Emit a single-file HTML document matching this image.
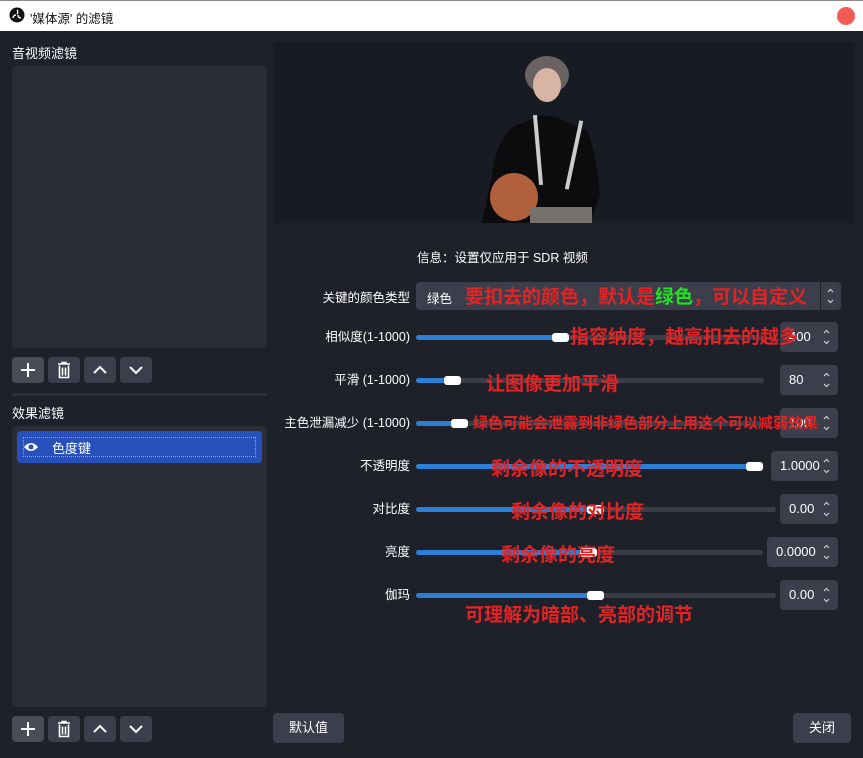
<!DOCTYPE html><html><head><meta charset="utf-8"><style>
*{margin:0;padding:0;box-sizing:border-box}
body{width:863px;height:758px;background:#1f212a;font-family:"Liberation Sans","Noto Sans CJK SC",sans-serif;color:#fff;position:relative;overflow:hidden;font-size:13px}
.a{position:absolute}
.panel{background:#2a2c37;border-radius:4px}
.btn{background:#3c3e4b;border-radius:4px}
.track{position:absolute;height:5px;background:#3a3c47;border-radius:3px}
.fill{position:absolute;height:5px;background:#2b7fd6;border-radius:3px}
.hdl{position:absolute;width:17px;height:9px;background:#fff;border-radius:3px}
.lbl{position:absolute;right:453px;font-size:12.5px;text-align:right;white-space:nowrap}
.spin{position:absolute;background:#3c3e4b;border-radius:4px;height:30px;font-size:13px;line-height:30px;padding-left:9px}
.spin svg{position:absolute;right:7px;top:6px}
.red{position:absolute;color:#e42424;font-weight:bold;white-space:nowrap;font-family:"Noto Sans CJK SC",sans-serif}
</style></head><body>
<div class="a" style="left:0;top:0;width:863px;height:31px;background:#fff;border-top:1px solid #888"></div>
<svg class="a" style="left:9px;top:7px" width="16" height="16" viewBox="0 0 16 16"><circle cx="8" cy="8" r="7.5" fill="#111"/><path d="M8 3a3 3 0 0 1 0 4M4 11a3 3 0 0 1 3-3M12 11a3 3 0 0 1-3-3" stroke="#fff" stroke-width="1.5" fill="none"/></svg>
<div class="a" style="left:30px;top:8px;color:#111;font-size:12.5px">'媒体源' 的滤镜</div>
<div class="a" style="left:837px;top:7px;width:18px;height:18px;border-radius:50%;background:#f25c54"></div>

<div class="a" style="left:12px;top:43px;font-size:13px">音视频滤镜</div>
<div class="a panel" style="left:12px;top:66px;width:255px;height:282px"></div>
<div class="a btn" style="left:12px;top:357px;width:32px;height:26px;background:#4a4c58"></div>
<svg class="a" style="left:20px;top:362px" width="16" height="16"><path d="M8 1v14M1 8h14" stroke="#fff" stroke-width="2"/></svg>
<div class="a btn" style="left:48px;top:357px;width:32px;height:26px"></div>
<svg class="a" style="left:56px;top:361px" width="16" height="18"><path d="M2 3h12M6 3V1.5h4V3M3.5 4.5v12h9v-12M6.5 6.5v8M9.5 6.5v8" stroke="#fff" stroke-width="1.6" fill="none"/></svg>
<div class="a btn" style="left:84px;top:357px;width:32px;height:26px"></div>
<svg class="a" style="left:92px;top:364px" width="16" height="12"><path d="M2 9l6-6 6 6" stroke="#fff" stroke-width="2" fill="none"/></svg>
<div class="a btn" style="left:120px;top:357px;width:32px;height:26px"></div>
<svg class="a" style="left:128px;top:364px" width="16" height="12"><path d="M2 3l6 6 6-6" stroke="#fff" stroke-width="2" fill="none"/></svg>
<div class="a" style="left:12px;top:393px;width:255px;height:3px;background:#2c2e3a"></div>
<div class="a" style="left:12px;top:403px">效果滤镜</div>
<div class="a panel" style="left:12px;top:426px;width:255px;height:281px"></div>
<div class="a" style="left:17px;top:431px;width:245px;height:32px;background:#2750bc;border-radius:4px"></div>
<div class="a" style="left:23px;top:437px;width:233px;height:20px;border:1px dotted #c9a94a"></div>
<svg class="a" style="left:23px;top:440px" width="16" height="14"><path d="M1 7Q8 -1 15 7Q8 15 1 7Z" fill="#fff"/><circle cx="8" cy="7" r="2.5" fill="#2750bc"/></svg>
<div class="a" style="left:52px;top:438px">色度键</div>
<div class="a btn" style="left:12px;top:716px;width:32px;height:26px;background:#4a4c58"></div>
<svg class="a" style="left:20px;top:721px" width="16" height="16"><path d="M8 1v14M1 8h14" stroke="#fff" stroke-width="2"/></svg>
<div class="a btn" style="left:48px;top:716px;width:32px;height:26px"></div>
<svg class="a" style="left:56px;top:720px" width="16" height="18"><path d="M2 3h12M6 3V1.5h4V3M3.5 4.5v12h9v-12M6.5 6.5v8M9.5 6.5v8" stroke="#fff" stroke-width="1.6" fill="none"/></svg>
<div class="a btn" style="left:84px;top:716px;width:32px;height:26px"></div>
<svg class="a" style="left:92px;top:723px" width="16" height="12"><path d="M2 9l6-6 6 6" stroke="#fff" stroke-width="2" fill="none"/></svg>
<div class="a btn" style="left:120px;top:716px;width:32px;height:26px"></div>
<svg class="a" style="left:128px;top:723px" width="16" height="12"><path d="M2 3l6 6 6-6" stroke="#fff" stroke-width="2" fill="none"/></svg>

<div class="a" style="left:273px;top:42px;width:582px;height:181px;background:#191b24"></div>
<svg class="a" style="left:472px;top:55px" width="130" height="168"><ellipse cx="75" cy="20" rx="22" ry="19" fill="#6a6262"/><ellipse cx="75" cy="30" rx="14" ry="17" fill="#d8b4a4"/><path d="M10 168L20 120Q25 80 45 70L70 60Q90 62 100 70L115 75Q125 100 128 140L118 168Z" fill="#0c0c0e"/><rect x="64" y="60" width="4" height="70" fill="#ccc" transform="rotate(-5 66 95)"/><rect x="100" y="65" width="4" height="70" fill="#ccc" transform="rotate(12 102 100)"/><circle cx="42" cy="142" r="24" fill="#b0603a"/><rect x="58" y="152" width="62" height="16" fill="#77716c"/></svg>
<div class="a" style="left:417px;top:247px;font-size:12.5px">信息：设置仅应用于 SDR 视频</div>

<div class="lbl" style="top:287px">关键的颜色类型</div>
<div class="a" style="left:416px;top:282px;width:425px;height:28px;background:#3c3e4b;border-radius:4px"></div>
<div class="a" style="left:820px;top:282px;width:1px;height:28px;background:#1f212a"></div>
<div class="a" style="left:427px;top:288px;font-size:12.5px">绿色</div>
<svg class="a" style="left:826px;top:287px" width="9" height="18"><path d="M2 5l2.5-2.5L7 5M2 13l2.5 2.5L7 13" stroke="#ddd" fill="none"/></svg>
<div class="red" style="left:465px;top:283px;font-size:19px;line-height:25px">要扣去的颜色，默认是<span style="color:#22e022">绿色</span>，可以自定义</div>

<div class="lbl" style="top:326px">相似度(1-1000)</div>
<div class="track" style="left:416px;top:335px;width:348px"></div><div class="fill" style="left:416px;top:335px;width:144px"></div><div class="hdl" style="left:552px;top:333px"></div>
<div class="spin" style="left:780px;top:322px;width:58px">400<svg width="9" height="18"><path d="M2 5l2.5-2.5L7 5M2 13l2.5 2.5L7 13" stroke="#ddd" fill="none"/></svg></div>
<div class="red" style="left:570px;top:322px;font-size:19px">指容纳度，越高扣去的越多</div>

<div class="lbl" style="top:369px">平滑 (1-1000)</div>
<div class="track" style="left:416px;top:378px;width:348px"></div><div class="fill" style="left:416px;top:378px;width:36px"></div><div class="hdl" style="left:444px;top:376px"></div>
<div class="spin" style="left:780px;top:365px;width:58px">80<svg width="9" height="18"><path d="M2 5l2.5-2.5L7 5M2 13l2.5 2.5L7 13" stroke="#ddd" fill="none"/></svg></div>
<div class="red" style="left:486px;top:369px;font-size:19px">让图像更加平滑</div>

<div class="lbl" style="top:412px">主色泄漏减少 (1-1000)</div>
<div class="track" style="left:416px;top:421px;width:348px"></div><div class="fill" style="left:416px;top:421px;width:44px"></div><div class="hdl" style="left:451px;top:419px"></div>
<div class="spin" style="left:780px;top:408px;width:58px">100<svg width="9" height="18"><path d="M2 5l2.5-2.5L7 5M2 13l2.5 2.5L7 13" stroke="#ddd" fill="none"/></svg></div>
<div class="red" style="left:473px;top:412px;font-size:15px">绿色可能会泄露到非绿色部分上用这个可以减弱效果</div>

<div class="lbl" style="top:455px">不透明度</div>
<div class="track" style="left:416px;top:464px;width:348px"></div><div class="fill" style="left:416px;top:464px;width:344px"></div><div class="hdl" style="left:746px;top:462px"></div>
<div class="spin" style="left:771px;top:451px;width:67px">1.0000<svg width="9" height="18"><path d="M2 5l2.5-2.5L7 5M2 13l2.5 2.5L7 13" stroke="#ddd" fill="none"/></svg></div>
<div class="red" style="left:491px;top:454px;font-size:19px">剩余像的不透明度</div>

<div class="lbl" style="top:498px">对比度</div>
<div class="track" style="left:416px;top:507px;width:360px"></div><div class="fill" style="left:416px;top:507px;width:180px"></div><div class="hdl" style="left:587px;top:505px"></div>
<div class="spin" style="left:780px;top:494px;width:58px">0.00<svg width="9" height="18"><path d="M2 5l2.5-2.5L7 5M2 13l2.5 2.5L7 13" stroke="#ddd" fill="none"/></svg></div>
<div class="red" style="left:511px;top:497px;font-size:19px">剩余像的对比度</div>

<div class="lbl" style="top:541px">亮度</div>
<div class="track" style="left:416px;top:550px;width:347px"></div><div class="fill" style="left:416px;top:550px;width:172px"></div><div class="hdl" style="left:580px;top:548px"></div>
<div class="spin" style="left:767px;top:537px;width:71px">0.0000<svg width="9" height="18"><path d="M2 5l2.5-2.5L7 5M2 13l2.5 2.5L7 13" stroke="#ddd" fill="none"/></svg></div>
<div class="red" style="left:501px;top:540px;font-size:19px">剩余像的亮度</div>

<div class="lbl" style="top:584px">伽玛</div>
<div class="track" style="left:416px;top:593px;width:360px"></div><div class="fill" style="left:416px;top:593px;width:180px"></div><div class="hdl" style="left:587px;top:591px"></div>
<div class="spin" style="left:780px;top:580px;width:58px">0.00<svg width="9" height="18"><path d="M2 5l2.5-2.5L7 5M2 13l2.5 2.5L7 13" stroke="#ddd" fill="none"/></svg></div>
<div class="red" style="left:465px;top:600px;font-size:19px">可理解为暗部、亮部的调节</div>

<div class="a btn" style="left:273px;top:713px;width:71px;height:30px;text-align:center;line-height:30px">默认值</div>
<div class="a btn" style="left:793px;top:713px;width:58px;height:30px;text-align:center;line-height:30px">关闭</div>
</body></html>
